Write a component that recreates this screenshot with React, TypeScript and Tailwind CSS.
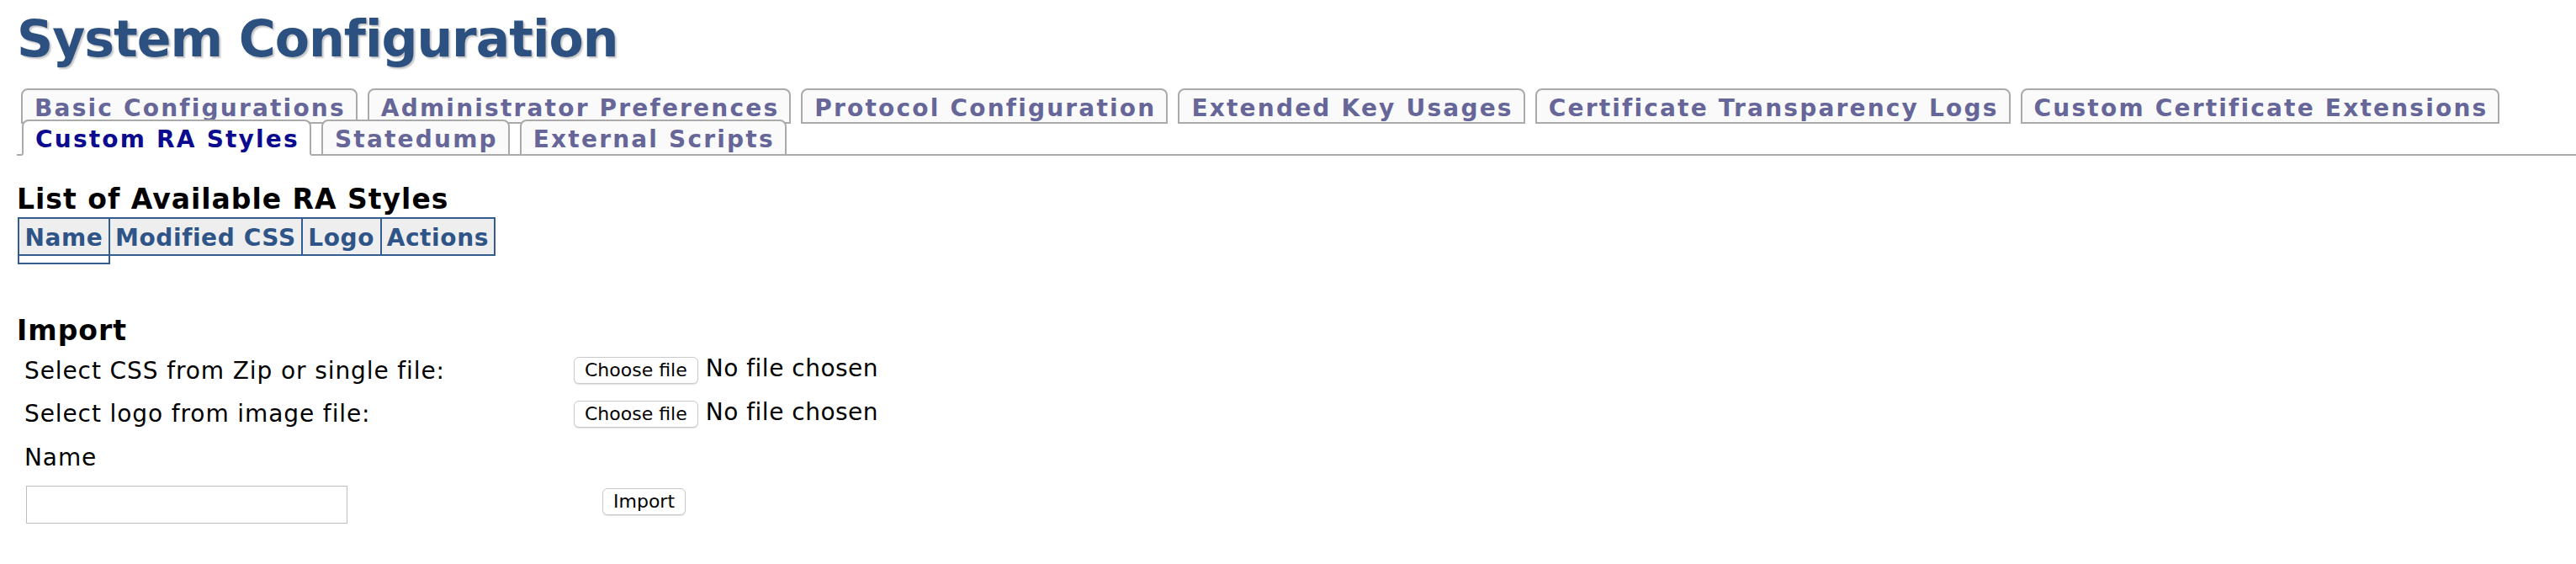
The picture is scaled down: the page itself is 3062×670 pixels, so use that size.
import React from "react";

const topTabs = [
  "Basic Configurations",
  "Administrator Preferences",
  "Protocol Configuration",
  "Extended Key Usages",
  "Certificate Transparency Logs",
  "Custom Certificate Extensions",
];

const bottomTabs = [
  { name: "Custom RA Styles", active: true },
  { name: "Statedump", active: false },
  { name: "External Scripts", active: false },
];

const tabBase =
  "rounded-t-[8px] border-2 border-[#aaaaaa] pl-[14px] pr-[12px] pt-[5px] text-[28px] font-bold leading-[33px] tracking-[2.2px] whitespace-nowrap";

const btn =
  "h-[32px] rounded-[6px] border border-[#c9c9c9] bg-white px-[12px] text-[22px] leading-[30px] text-black shadow-[0_1px_1px_rgba(0,0,0,0.12)]";

const th = "whitespace-nowrap border-[#335c90] bg-[#eeeeee] px-[6px] pb-[3px] pt-[6px]";

function FileField() {
  return (
    <div className="flex items-baseline">
      <button className={btn}>Choose file</button>
      <span className="ml-[9px] text-[28px] leading-[33px] tracking-[0.5px] text-black">No file chosen</span>
    </div>
  );
}

export default function App() {
  return (
    <div className="min-h-[670px] bg-white pl-5 font-['DejaVu_Sans','Verdana',sans-serif] text-black">
      <h1 className="pt-[11px] text-[60px] font-bold leading-[70px] tracking-[-1px] text-[#2c5080] [text-shadow:2px_2px_2px_#c4c4c4]">
        System Configuration
      </h1>

      {/* tab strip */}
      <div className="mt-[24px] border-b-2 border-[#aaaaaa]">
        <div className="flex gap-[12px] pl-[5px]">
          {topTabs.map((t) => (
            <div key={t} className={`${tabBase} bg-[#fafafa] text-[#666699]`}>
              {t}
            </div>
          ))}
        </div>
        <div className="relative -mb-[2px] -mt-[5px] flex gap-[12px] pl-[6px]">
          {bottomTabs.map((t) =>
            t.active ? (
              <div key={t.name} className={`${tabBase} border-b-white bg-white pb-[1px] text-[#0b0b8f]`}>
                {t.name}
              </div>
            ) : (
              <div key={t.name} className={`${tabBase} bg-[#fafafa] pb-[1px] text-[#666699]`}>
                {t.name}
              </div>
            )
          )}
        </div>
      </div>

      <h3 className="mt-[33px] text-[33px] font-bold leading-[38px] tracking-[1px]">List of Available RA Styles</h3>
      <table className="ml-[1px] mt-[2px] border-separate border-spacing-0 text-[28px] font-bold leading-[33px] tracking-[0.6px] text-[#2f5487]">
        <thead>
          <tr>
            <th className={`w-[110px] border-2 ${th}`}>Name</th>
            <th className={`w-[228px] border-y-2 border-r-2 ${th}`}>Modified CSS</th>
            <th className={`w-[94px] border-y-2 border-r-2 ${th}`}>Logo</th>
            <th className={`w-[135px] border-y-2 border-r-2 ${th}`}>Actions</th>
          </tr>
        </thead>
        <tbody>
          <tr>
            <td className="h-[10px] border-x-2 border-b-2 border-[#335c90] p-0"></td>
          </tr>
        </tbody>
      </table>

      <h3 className="mt-[60px] text-[33px] font-bold leading-[38px] tracking-[1px]">Import</h3>
      <div className="grid grid-cols-[653px_auto] pl-[9px] text-[28px] leading-[33px] tracking-[0.9px]">
        <div className="h-[52px] pt-[12px]">Select CSS from Zip or single file:</div>
        <div className="h-[52px] pt-[9px] tracking-normal">
          <FileField />
        </div>
        <div className="h-[52px] pt-[11px]">Select logo from image file:</div>
        <div className="h-[52px] pt-[9px] tracking-normal">
          <FileField />
        </div>
        <div className="h-[52px] pt-[11px]">Name</div>
        <div className="h-[52px]"></div>
        <div className="pt-[9px]">
          <input type="text" className="ml-[2px] block h-[45px] w-[382px] border border-[#bdbdbd] bg-white px-2 text-[24px] outline-none" />
        </div>
        <div className="pt-[9px] tracking-normal">
          <button className={`ml-[34px] ${btn}`}>Import</button>
        </div>
      </div>
    </div>
  );
}
